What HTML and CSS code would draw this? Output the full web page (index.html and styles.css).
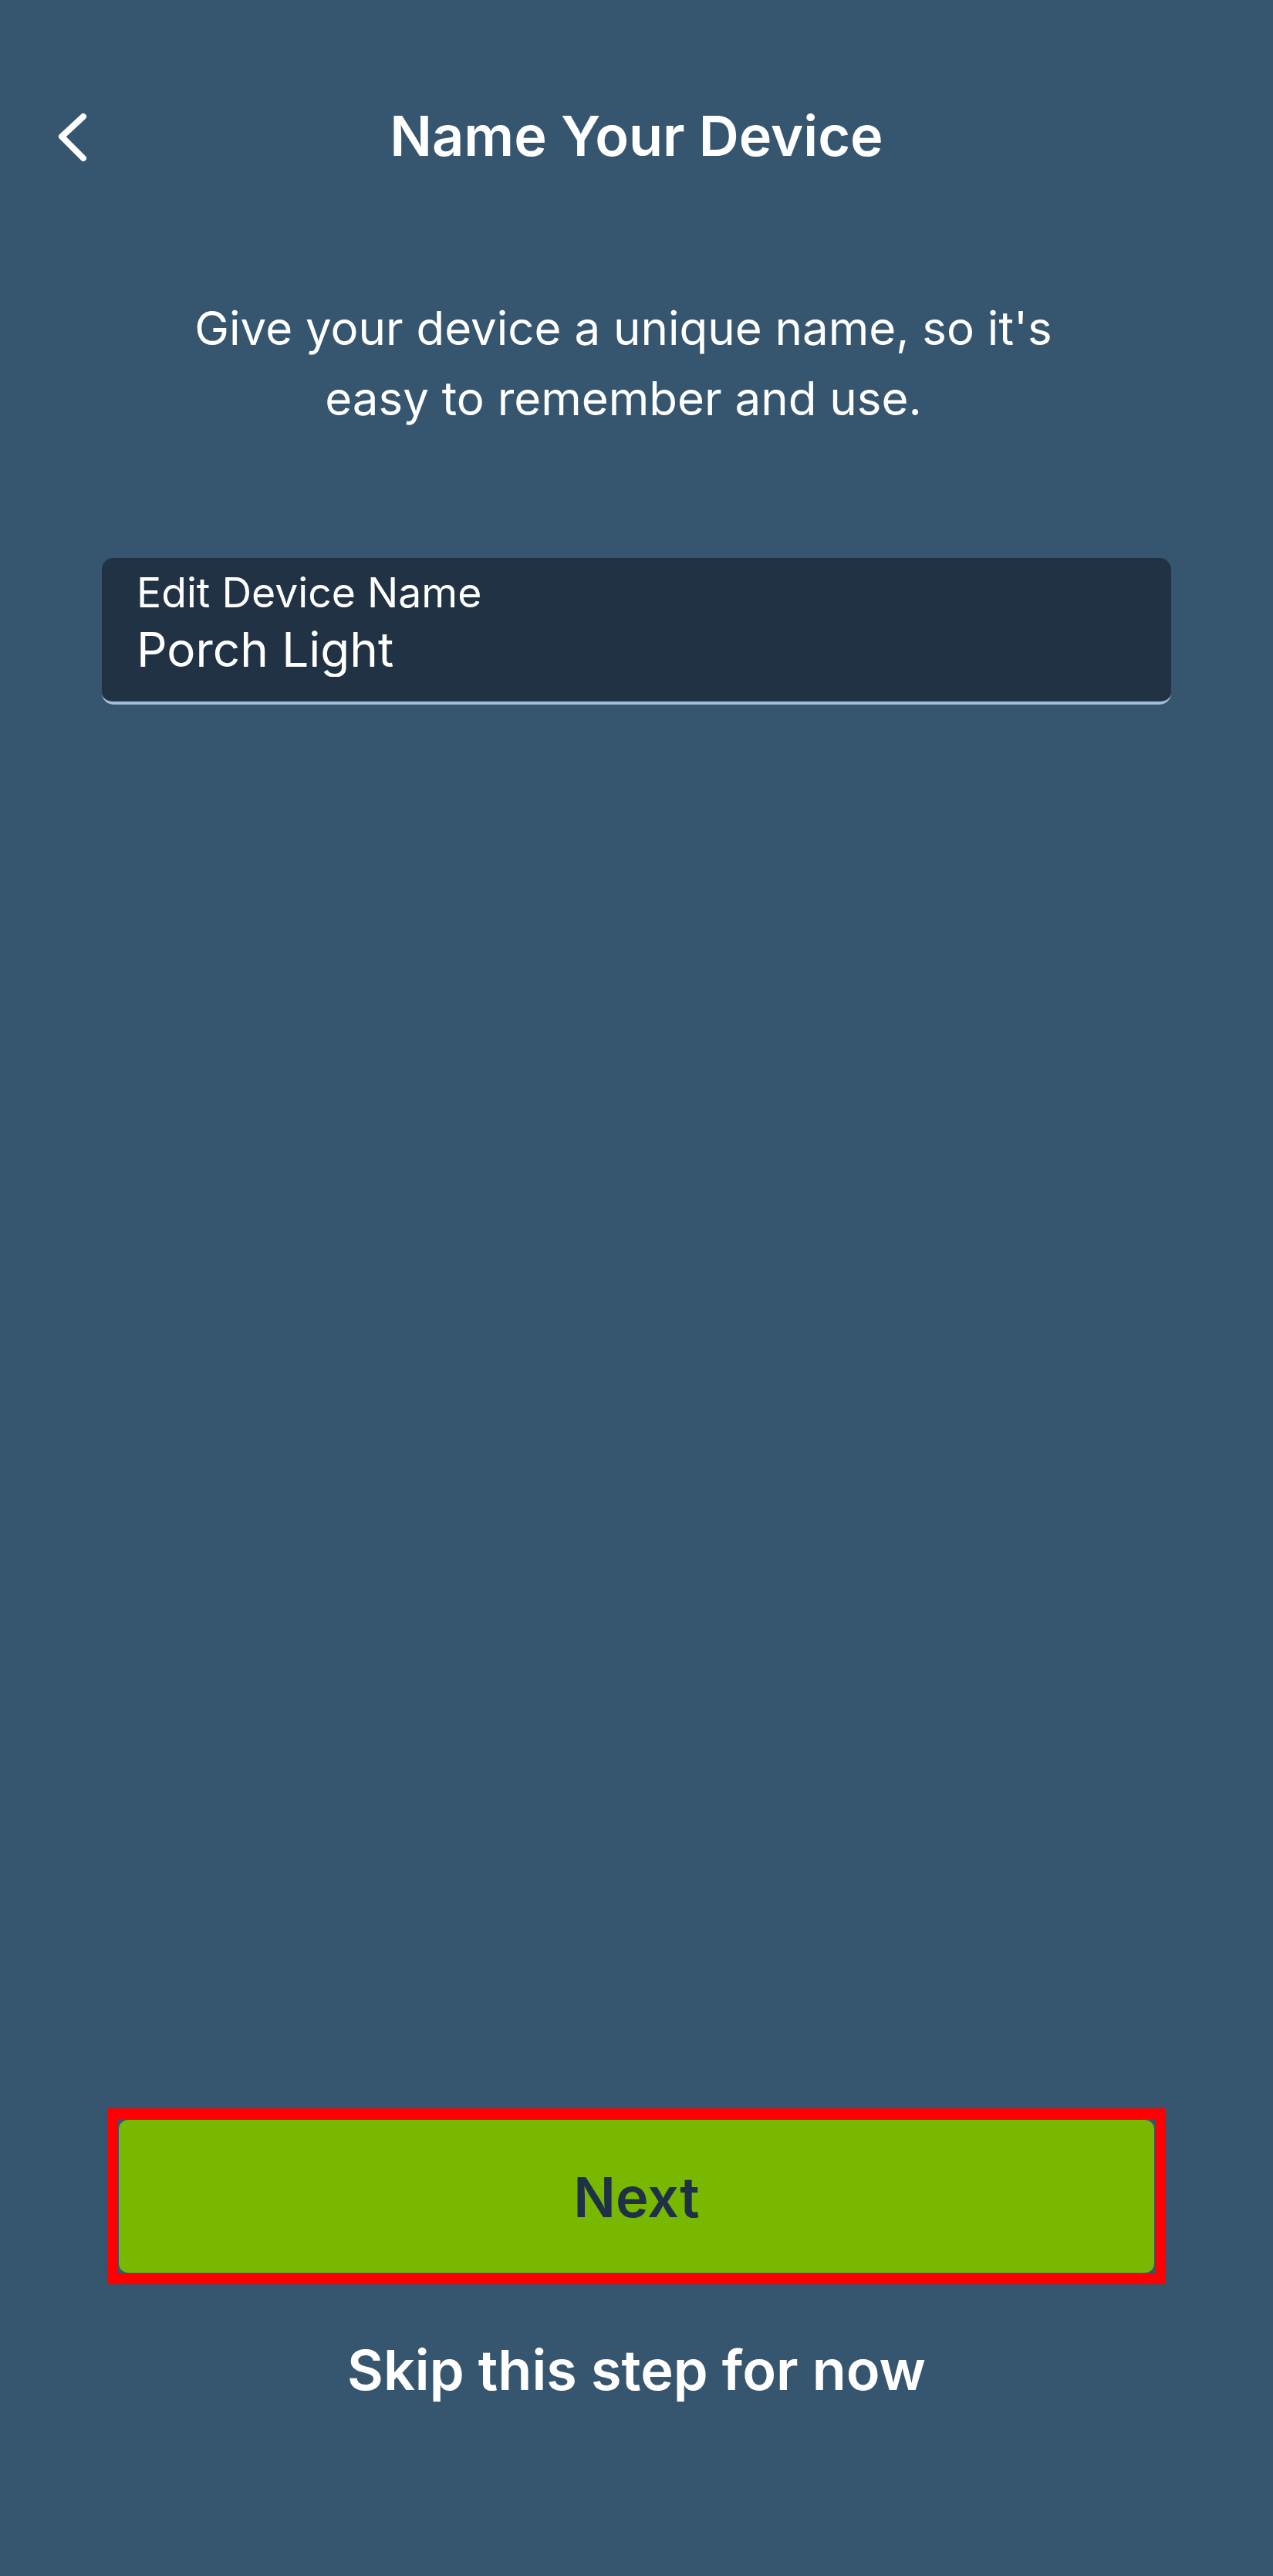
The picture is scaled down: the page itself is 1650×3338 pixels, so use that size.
FILE: index.html
```html
<!DOCTYPE html>
<html lang="en">
<head>
<meta charset="UTF-8" />
<meta name="viewport" content="width=device-width, initial-scale=1" />
<title>Name Your Device</title>
<link rel="stylesheet" href="styles.css">
</head>
<body>

  <div class="screen">
    <div class="top-bar">
      <button class="back-btn" aria-label="Back">
        <svg width="48" height="72" viewBox="0 0 48 72">
          <polyline points="36,11 8,37 36,65" fill="none" stroke="#fff" stroke-width="8" stroke-linecap="round" stroke-linejoin="round" />
        </svg>
      </button>
      <h1 class="title">Name Your Device</h1>
      <div></div>
    </div>

    <p class="intro">Give your device a unique name, so it's<br />easy to remember and use.</p>

    <div class="name-field">
      <label for="deviceName">Edit Device Name</label>
      <input type="text" id="deviceName" value="Porch Light" />
    </div>

    <div class="footer">
      <div class="highlight">
        <button class="next-btn">Next</button>
      </div>
      <button class="skip-btn">Skip this step for now</button>
    </div>
  </div>

</body>
</html>
```

FILE: styles.css
```css
body {
  margin: 0;
  font-family: Inter, "Noto Sans", sans-serif;
  background-color: #36566f;
  color: #fff;
}

.screen {
  min-height: 100vh;
  display: flex;
  flex-direction: column;
}

.top-bar {
  display: grid;
  grid-template-columns: 1fr auto 1fr;
  align-items: center;
  padding-top: 133px;
}

.back-btn {
  justify-self: start;
  margin-left: 72px;
  padding: 0;
  background: none;
  border: none;
  display: flex;
  cursor: pointer;
}

.title {
  margin: 0;
  font-size: 72px;
  line-height: 86px;
  font-weight: 600;
}

.intro {
  margin: 161px 0 0;
  padding-right: 34px;
  text-align: center;
  font-size: 60px;
  line-height: 91px;
}

.name-field {
  margin: 161px 132px 0;
  padding: 14px 45px 32px;
  background-color: #203243;
  border-radius: 15px;
  border-bottom: 4px solid #a3bdd8;
  display: flex;
  flex-direction: column;
  gap: 8px;
}

.name-field label {
  font-size: 53.5px;
  line-height: 62px;
}

.name-field input {
  padding: 0;
  border: none;
  outline: none;
  background: none;
  color: #fff;
  font-family: inherit;
  font-size: 62px;
  line-height: 70px;
  height: 70px;
}

.footer {
  margin-top: auto;
  padding: 0 139px 223px;
  display: flex;
  flex-direction: column;
}

/* red frame round the main action */
.highlight {
  border: 14px solid #ff0000;
  padding: 1px;
}

.next-btn {
  width: 100%;
  height: 198px;
  background-color: #78b800;
  color: #1f3147;
  border: none;
  border-radius: 12px;
  font-family: inherit;
  font-size: 72px;
  font-weight: 600;
  cursor: pointer;
}

.skip-btn {
  margin-top: 67px;
  background: none;
  border: none;
  color: #fff;
  font-family: inherit;
  font-size: 72px;
  line-height: 86px;
  font-weight: 600;
  cursor: pointer;
}
```
